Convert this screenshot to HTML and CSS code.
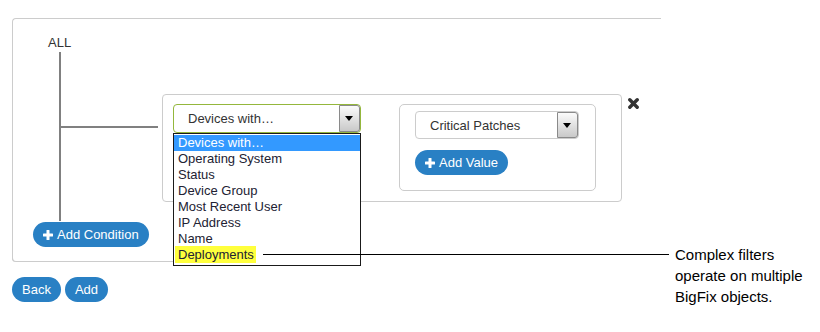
FILE: index.html
```html
<!DOCTYPE html>
<html lang="en">
  <head>
    <meta charset="UTF-8" />
    <title>Filter conditions</title>
    <link rel="stylesheet" href="styles.css">
  </head>
  <body>
    <section class="filter">
      <div class="root">ALL</div>
      <div class="branch">
        <span class="connector"></span>
        <div class="condition">
          <div class="select-wrap">
            <div class="select select-active">
              <span class="select-text">Devices with…</span>
              <span class="select-arrow"></span>
            </div>
            <ul class="options">
              <li class="selected">Devices with…</li>
              <li>Operating System</li>
              <li>Status</li>
              <li>Device Group</li>
              <li>Most Recent User</li>
              <li>IP Address</li>
              <li>Name</li>
              <li><span class="mark">Deployments</span></li>
            </ul>
          </div>

          <div class="values">
            <div class="select select-value">
              <span class="select-text">Critical Patches</span>
              <span class="select-arrow"></span>
            </div>
            <button class="btn">
              <svg class="plus" width="10" height="10" viewBox="0 0 10 10"><rect x="3.5" y="0" width="3" height="10" rx="0.6" /><rect x="0" y="3.5" width="10" height="3" rx="0.6" /></svg>
              Add Value
            </button>
          </div>

          <svg class="remove" width="11" height="11" viewBox="0 0 11 11">
            <path d="M1.8 1.8 L9.2 9.2 M9.2 1.8 L1.8 9.2" />
          </svg>
        </div>
      </div>
      <button class="btn add-condition">
        <svg class="plus" width="10" height="10" viewBox="0 0 10 10"><rect x="3.5" y="0" width="3" height="10" rx="0.6" /><rect x="0" y="3.5" width="10" height="3" rx="0.6" /></svg>
        Add Condition
      </button>
    </section>

    <div class="actions">
      <button class="btn">Back</button>
      <button class="btn">Add</button>
    </div>

    <!-- annotation -->
    <div class="callout">
      <span class="callout-line"></span>
      <p>Complex filters<br />operate on multiple<br />BigFix objects.</p>
    </div>
  </body>
</html>
```

FILE: styles.css
```css
html {
  background: #ffffff;
}

body {
  margin: 0;
  min-height: 332px;
  position: relative;
  font-family: "Liberation Sans", Arial, sans-serif;
  font-size: 13px;
  color: #333333;
}

/* outer filter panel */
.filter {
  position: relative;
  box-sizing: border-box;
  width: 649px;
  margin: 18px 0 0 12px;
  padding: 15px 0 15px 35px;
  border: 1px solid #cccccc;
  border-right: 0;
  border-bottom: 0;
  border-top-left-radius: 4px;
  border-bottom-left-radius: 4px;
}
.filter::after {
  content: "";
  position: absolute;
  left: -1px;
  bottom: 0;
  width: 170px;
  height: 12px;
  border-left: 1px solid #cccccc;
  border-bottom: 1px solid #cccccc;
  border-bottom-left-radius: 4px;
}

.root {
  line-height: 18px;
}

/* tree */
.branch {
  display: flex;
  align-items: flex-start;
  gap: 4px;
  margin-left: 11px;
  padding: 42px 0 19px;
  border-left: 2px solid #808080;
}
.connector {
  width: 97px;
  height: 2px;
  margin-top: 32px;
  background: #808080;
}

/* condition card */
.condition {
  position: relative;
  display: flex;
  align-items: flex-start;
  gap: 38px;
  box-sizing: border-box;
  width: 460px;
  padding: 9px 0 10px 10px;
  border: 1px solid #cccccc;
  border-radius: 4px;
}
.remove {
  position: absolute;
  top: 3px;
  right: -18px;
  stroke: #333333;
  stroke-width: 3.4;
  stroke-linecap: round;
  fill: none;
}

/* selects */
.select-wrap {
  position: relative;
  z-index: 1;
}
.select {
  display: flex;
  align-items: center;
  justify-content: space-between;
  box-sizing: border-box;
  border-radius: 4px;
  background: #ffffff;
}
.select-active {
  width: 188px;
  height: 29px;
  border: 1px solid #94b73c;
}
.select-value {
  width: 164px;
  height: 28px;
  border: 1px solid #cccccc;
}
.select-text {
  padding-left: 14px;
}
.select-arrow {
  position: relative;
  box-sizing: border-box;
  width: 21px;
  height: 100%;
  border: 1px solid #8a8a8a;
  border-radius: 0 3px 3px 0;
  background: linear-gradient(#fbfbfb, #c9c9c9);
}
.select-arrow::after {
  content: "";
  position: absolute;
  left: 5px;
  top: 10px;
  border-left: 4px solid transparent;
  border-right: 4px solid transparent;
  border-top: 5px solid #000000;
}

.options {
  position: absolute;
  top: 100%;
  left: 0;
  box-sizing: border-box;
  width: 188px;
  margin: 0;
  padding: 1px 0 2px;
  list-style: none;
  background: #ffffff;
  border: 1px solid #1a1a1a;
  color: #222233;
  line-height: 16px;
}
.options li {
  padding-left: 4px;
}
.options li.selected {
  background: #3399ff;
  color: #ffffff;
}
.mark {
  margin-left: -3px;
  padding: 1px 2px 1px 3px;
  background: #ffff3c;
}

/* values box */
.values {
  display: flex;
  flex-direction: column;
  align-items: flex-start;
  gap: 11px;
  box-sizing: border-box;
  width: 197px;
  padding: 6px 15px 15px;
  border: 1px solid #cccccc;
  border-radius: 5px;
}

/* buttons */
.btn {
  display: inline-flex;
  align-items: center;
  gap: 4px;
  height: 25px;
  padding: 0 10px;
  border: 0;
  border-radius: 13px;
  background: #2980c4;
  color: #ffffff;
  font-family: inherit;
  font-size: 13px;
  cursor: pointer;
}
.plus {
  fill: #ffffff;
}
.add-condition {
  margin: 1px 0 0 -15px;
}

.actions {
  display: flex;
  gap: 4px;
  margin: 15px 0 0 12px;
}

/* annotation */
.callout {
  position: absolute;
  z-index: 2;
  left: 263px;
  top: 244px;
  display: flex;
  align-items: flex-start;
  gap: 6px;
}
.callout-line {
  width: 406px;
  height: 1px;
  margin-top: 10px;
  background: #000000;
}
.callout p {
  margin: 0;
  font-size: 15px;
  line-height: 21px;
  color: #000000;
}
```
